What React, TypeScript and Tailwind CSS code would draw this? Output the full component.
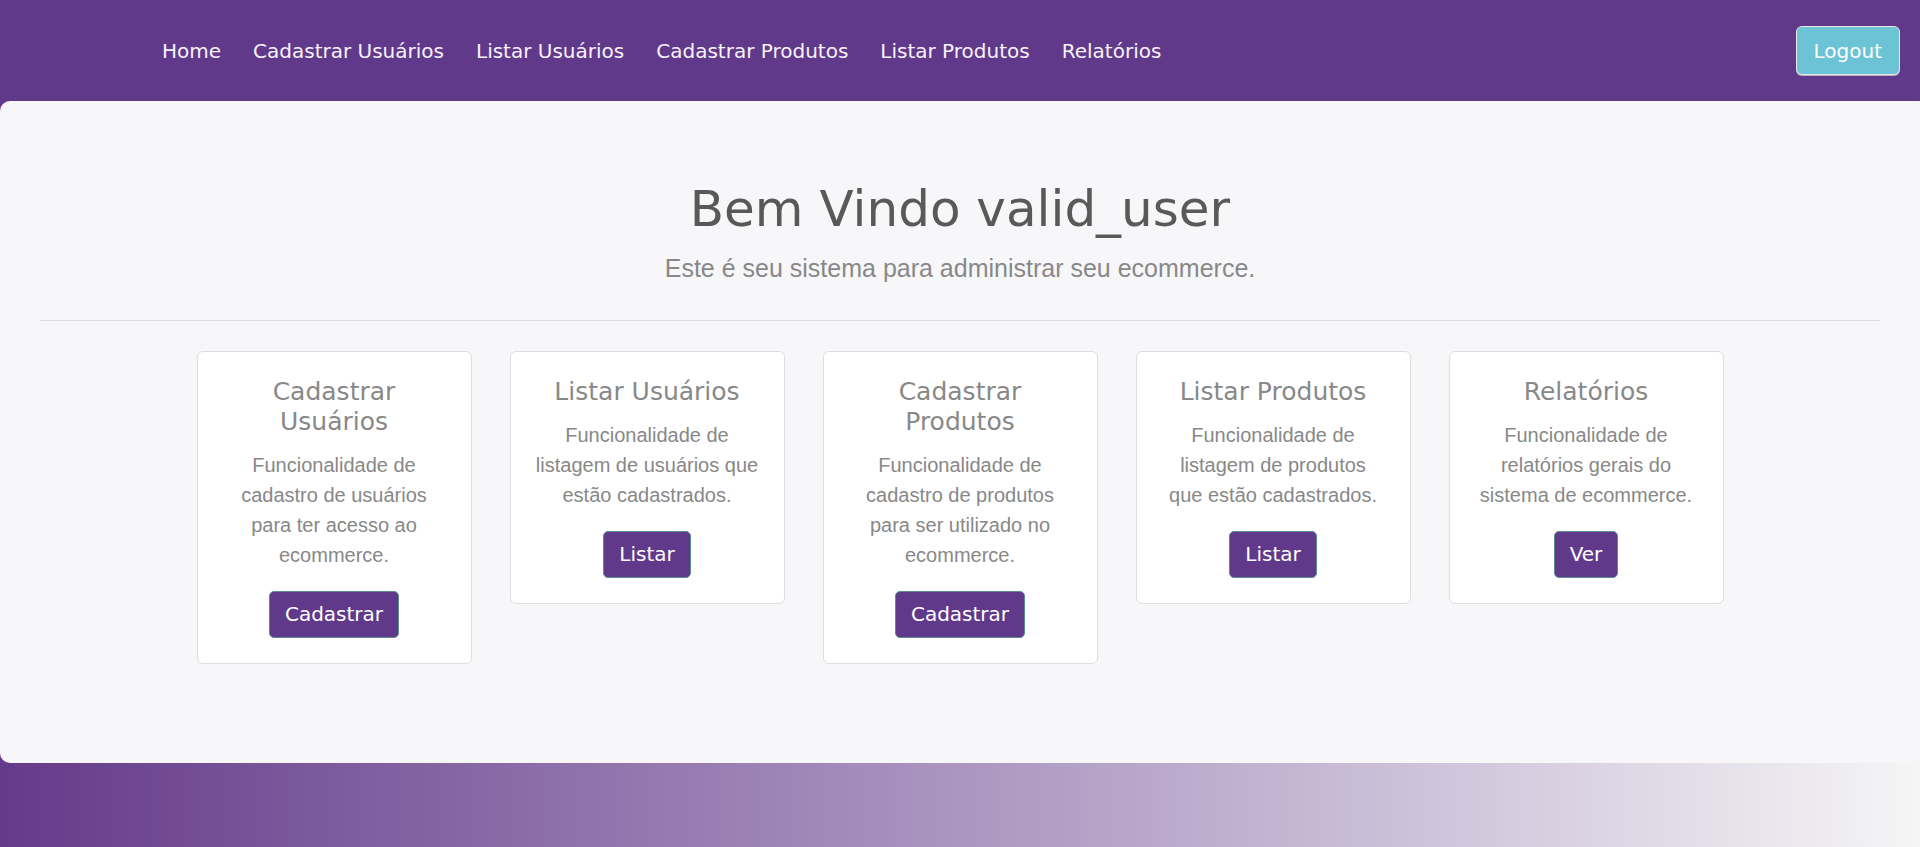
const navLinks = [
  "Home",
  "Cadastrar Usuários",
  "Listar Usuários",
  "Cadastrar Produtos",
  "Listar Produtos",
  "Relatórios",
];

interface Feature {
  title: string;
  text: string;
  action: string;
}

const features: Feature[] = [
  {
    title: "Cadastrar Usuários",
    text: "Funcionalidade de cadastro de usuários para ter acesso ao ecommerce.",
    action: "Cadastrar",
  },
  {
    title: "Listar Usuários",
    text: "Funcionalidade de listagem de usuários que estão cadastrados.",
    action: "Listar",
  },
  {
    title: "Cadastrar Produtos",
    text: "Funcionalidade de cadastro de produtos para ser utilizado no ecommerce.",
    action: "Cadastrar",
  },
  {
    title: "Listar Produtos",
    text: "Funcionalidade de listagem de produtos que estão cadastrados.",
    action: "Listar",
  },
  {
    title: "Relatórios",
    text: "Funcionalidade de relatórios gerais do sistema de ecommerce.",
    action: "Ver",
  },
];

function FeatureCard({ title, text, action }: Feature) {
  return (
    <div className="w-[275px] rounded-[6px] border border-[#dedede] bg-white p-[25px] text-center">
      <h5 className="mb-[13px] font-['DejaVu_Sans',sans-serif] text-[25px] leading-[30px] text-[#888888]">
        {title}
      </h5>
      <p className="mb-[21px] text-[20px] leading-[30px] text-[#888888]">{text}</p>
      <button
        type="button"
        className="inline-flex h-[47px] items-center rounded-[5px] border border-[#5d8c90] bg-[#61398a] px-[15px] font-['DejaVu_Sans',sans-serif] text-[20px] text-white"
      >
        {action}
      </button>
    </div>
  );
}

export default function App() {
  return (
    <div className="flex h-[847px] flex-col bg-gradient-to-r from-[#663a8a] to-[#f5f5f5] font-['Liberation_Sans',Arial,sans-serif]">
      {/* top navbar */}
      <header className="flex h-[101px] shrink-0 items-center justify-between bg-[#61398a] pl-[146px] pr-[20px]">
        <nav className="flex items-center">
          {navLinks.map((l) => (
            <a
              key={l}
              href="#"
              className="px-[16px] font-['DejaVu_Sans',sans-serif] text-[20px] text-[#f7f2fa]"
            >
              {l}
            </a>
          ))}
        </nav>
        <button
          type="button"
          className="flex h-[49px] items-center rounded-[6px] border border-[#e6e6e6] bg-[#6cc3d5] px-[17px] font-['DejaVu_Sans',sans-serif] text-[20px] text-white shadow-[0_1px_0_#b9b2c2]"
        >
          Logout
        </button>
      </header>

      {/* main panel */}
      <main className="h-[662px] shrink-0 rounded-[10px] bg-[#f7f7f9] px-[40px] pt-[78px]">
        <h1 className="mb-[11px] text-center font-['DejaVu_Sans',sans-serif] text-[50px] leading-[60px] text-[#595959]">
          Bem Vindo valid_user
        </h1>
        <p className="text-center text-[25px] leading-[37.5px] text-[#888888]">
          Este é seu sistema para administrar seu ecommerce.
        </p>
        <hr className="mt-[32px] mb-[30px] border-t border-[#dddddd]" />
        <div className="flex items-start justify-center gap-[38px]">
          {features.map((f) => (
            <FeatureCard key={f.title} {...f} />
          ))}
        </div>
      </main>
    </div>
  );
}
